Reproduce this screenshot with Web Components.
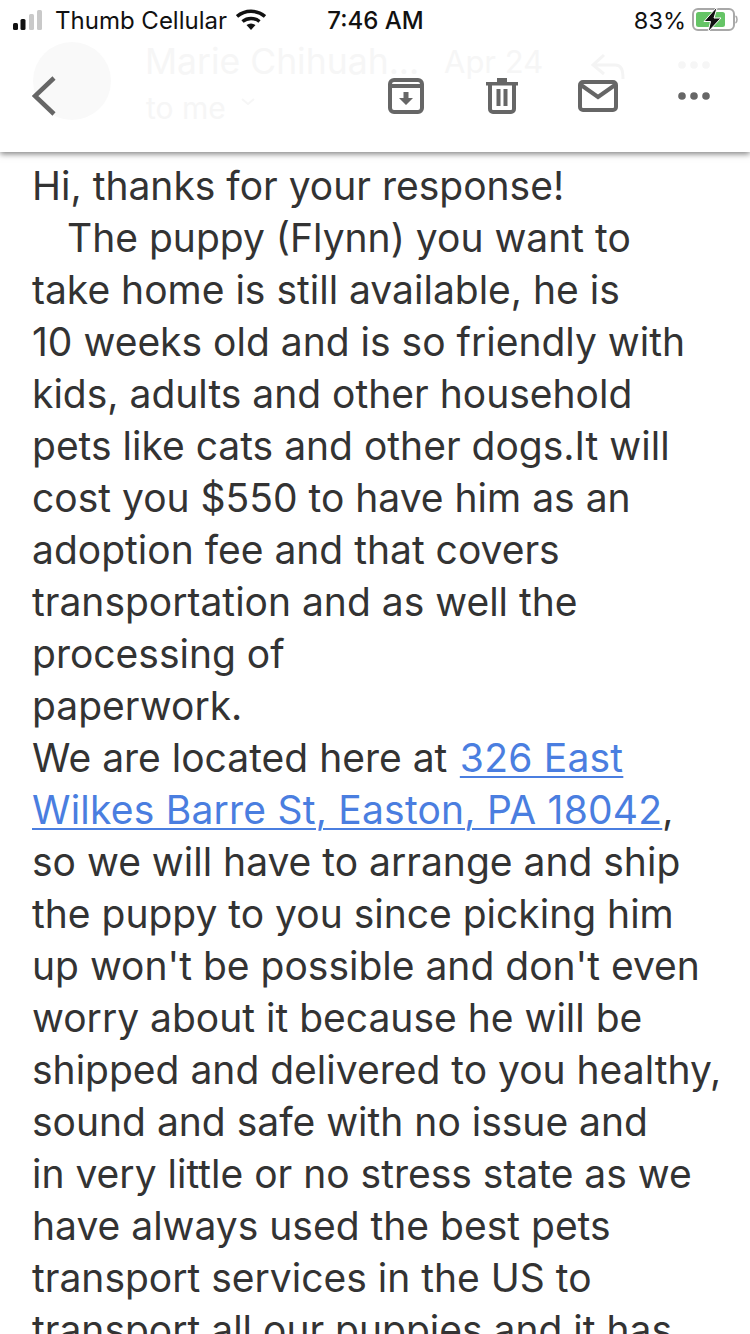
<!DOCTYPE html>
<html lang="en">
<head>
<meta charset="utf-8">
<title>Mail</title>
<style>
  html, body { margin: 0; height: 1334px; overflow: hidden; background: #fff; }
  body { font-family: Inter, "Liberation Sans", sans-serif; }
</style>
</head>
<body>
<mail-screen>
  <status-bar slot="status" carrier="Thumb Cellular" time="7:46 AM" battery="83%"></status-bar>
  <mail-toolbar slot="toolbar" sender="Marie Chihuah..." date="Apr 24" recipient="to me"></mail-toolbar>
  <mail-body>
    Hi, thanks for your response!<br>
    <span class="indent"></span>The puppy (Flynn) you want to<br>
    take home is still available, he is<br>
    10 weeks old and is so friendly with<br>
    kids, adults and other household<br>
    pets like cats and other dogs.It will<br>
    cost you $550 to have him as an<br>
    adoption fee and that covers<br>
    transportation and as well the<br>
    processing of<br>
    paperwork.<br>
    We are located here at <a href="#" style="color:#4a7ee0;margin-left:1.5px;letter-spacing:.22px;text-decoration:underline;text-decoration-thickness:2px;text-underline-offset:4px">326 East<br>Wilkes Barre St, Easton, PA 18042</a>,<br>
    so we will have to arrange and ship<br>
    the puppy to you since picking him<br>
    up won't be possible and don't even<br>
    worry about it because he will be<br>
    shipped and delivered to you healthy,<br>
    sound and safe with no issue and<br>
    in very little or no stress state as we<br>
    have always used the best pets<br>
    transport services in the US to<br>
    transport all our puppies and it has
  </mail-body>
</mail-screen>

<script>
// pantalla completa: status + toolbar + cuerpo del correo
class MailScreen extends HTMLElement {
  constructor() {
    super();
    this.attachShadow({ mode: "open" });
    this.shadowRoot.innerHTML = `
      <style>
        :host { display: flex; flex-direction: column; width: 750px; height: 1334px;
                overflow: hidden; background: #fff; }
        .top { flex: none; height: 152px; background: #fff; position: relative;
               box-shadow: 0 2px 6px rgba(0,0,0,.5); z-index: 1; }
      </style>
      <div class="top">
        <slot name="status"></slot>
        <slot name="toolbar"></slot>
      </div>
      <slot></slot>
    `;
  }
}

class StatusBar extends HTMLElement {
  constructor() {
    super();
    this.attachShadow({ mode: "open" });
    this.shadowRoot.innerHTML = `
      <style>
        :host { display: grid; grid-template-columns: 1fr auto 1fr; align-items: center;
                height: 40px; padding: 0 12px 0 13px; color: #111; font-size: 24px; }
        .left, .right { display: flex; align-items: center; }
        .left { gap: 9px; }
        .right { justify-content: flex-end; gap: 6px; }
        .right span { font-size: 23.500px; }
        .time { font-weight: 500; }
        svg { display: block; }
      </style>
      <div class="left">
        <svg width="33" height="20" viewBox="0 0 33 20">
          <rect x="0" y="13" width="5" height="7" rx="1.5" fill="#111"/>
          <rect x="7.500" y="9" width="5" height="11" rx="1.5" fill="#111"/>
          <rect x="16" y="4" width="5" height="16" rx="1.500" fill="#c9c9c9"/>
          <rect x="24" y="0" width="5" height="20" rx="1.500" fill="#c9c9c9"/>
        </svg>
        <span id="carrier"></span>
        <svg width="30" height="22" viewBox="0 0 30 22">
          <path d="M1 7.500C9 .5 21 .5 29 7.500" fill="none" stroke="#111" stroke-width="3.500"/>
          <path d="M6.500 12.500C11.500 8.500 18.500 8.500 23.500 12.500" fill="none" stroke="#111" stroke-width="3.500"/>
          <path d="M10.500 16L15 21l4.500-5C16.500 14 13.500 14 10.500 16z" fill="#111"/>
        </svg>
      </div>
      <div class="time" id="time"></div>
      <div class="right">
        <span id="battery"></span>
        <svg width="46" height="24" viewBox="0 0 46 24">
          <rect x="1" y="1" width="41" height="21" rx="5" fill="none" stroke="#a8a8a8" stroke-width="2"/>
          <rect x="4" y="4" width="29" height="15" rx="2.500" fill="#65c466"/>
          <path d="M43.500 8c2 1 2 6 0 7" fill="none" stroke="#a8a8a8" stroke-width="1.500"/>
          <path d="M24 0L12 13.500h6.500L16 24l13-14h-7l3-10z" fill="#111" stroke="#fff" stroke-width="1"/>
        </svg>
      </div>
    `;
    this.shadowRoot.querySelector("#carrier").textContent = this.getAttribute("carrier");
    this.shadowRoot.querySelector("#time").textContent = this.getAttribute("time");
    this.shadowRoot.querySelector("#battery").textContent = this.getAttribute("battery");
  }
}

// iconos de acción sobre una cabecera fantasma casi invisible (el correo detrás)
class MailToolbar extends HTMLElement {
  constructor() {
    super();
    this.attachShadow({ mode: "open" });
    this.shadowRoot.innerHTML = `
      <style>
        :host { display: flex; align-items: center; justify-content: space-between;
                position: relative; height: 112px; box-sizing: border-box;
                padding: 0 40px 0 32px; }
        .ghost { position: absolute; color: #f6f6f6; font-size: 35.500px; white-space: nowrap; }
        .avatar { position: absolute; left: 33px; top: 2px; width: 78px; height: 78px;
                  border-radius: 50%; background: #f9f9f9; }
        .sender { left: 145px; top: 0; }
        .date { left: 444px; top: 3px; font-size: 31px; }
        .to { left: 146px; top: 50px; font-size: 30px; }
        .ghost-icon { position: absolute; }
        .acts { position: relative; display: flex; align-items: center; }
        svg { display: block; }
      </style>
      <div class="avatar"></div>
      <span class="ghost sender" id="sender"></span>
      <span class="ghost date" id="date"></span>
      <span class="ghost to" id="to"></span>
      <svg class="ghost-icon" style="left:590px;top:13px" width="36" height="28" viewBox="0 0 36 28">
        <path d="M14 2L3 12l11 9M3 12h22c6 0 8 4 8 14" fill="none" stroke="#f4f4f4" stroke-width="3"/>
      </svg>
      <svg class="ghost-icon" style="left:678px;top:21px" width="32" height="8" viewBox="0 0 32 8">
        <circle cx="4" cy="4" r="3.800" fill="#f6f6f6"/>
        <circle cx="16" cy="4" r="3.800" fill="#f6f6f6"/>
        <circle cx="28" cy="4" r="3.800" fill="#f6f6f6"/>
      </svg>
      <svg class="ghost-icon" style="left:241px;top:58px" width="14" height="8" viewBox="0 0 14 8">
        <path d="M1 1l6 5 6-5" fill="none" stroke="#f6f6f6" stroke-width="2"/>
      </svg>
      <svg class="acts" width="24" height="40" viewBox="0 0 24 40">
        <path d="M22 2L3 20l19 18" fill="none" stroke="#666" stroke-width="4.500"/>
      </svg>
      <div class="acts">
        <svg width="36" height="36" viewBox="0 0 36 36" style="margin-right:62px">
          <rect x="2" y="2" width="32" height="32" rx="4" fill="none" stroke="#666" stroke-width="4"/>
          <path d="M2 8h32" stroke="#666" stroke-width="4"/>
          <path d="M15.500 14h5v6h4.500L18 27l-7-7h4.500z" fill="#666"/>
        </svg>
        <svg width="32" height="36" viewBox="0 0 32 36" style="margin-right:60px">
          <path d="M0 4h32v3.500H0zM11 0h10v4H11z" fill="#666"/>
          <path d="M4 6v25a3 3 0 0 0 3 3h18a3 3 0 0 0 3-3V6" fill="none" stroke="#666" stroke-width="4"/>
          <path d="M12.500 11v17M19.500 11v17" stroke="#666" stroke-width="4"/>
        </svg>
        <svg width="40" height="32" viewBox="0 0 40 32" style="margin-right:60px">
          <rect x="2" y="2" width="36" height="28" rx="3" fill="none" stroke="#666" stroke-width="4"/>
          <path d="M3 5l17 12L37 5" fill="none" stroke="#666" stroke-width="4"/>
        </svg>
        <svg width="32" height="8" viewBox="0 0 32 8">
          <circle cx="4" cy="4" r="3.800" fill="#666"/>
          <circle cx="16" cy="4" r="3.800" fill="#666"/>
          <circle cx="28" cy="4" r="3.800" fill="#666"/>
        </svg>
      </div>
    `;
    this.shadowRoot.querySelector("#sender").textContent = this.getAttribute("sender");
    this.shadowRoot.querySelector("#date").textContent = this.getAttribute("date");
    this.shadowRoot.querySelector("#to").textContent = this.getAttribute("recipient");
  }
}

class MailBody extends HTMLElement {
  constructor() {
    super();
    this.attachShadow({ mode: "open" });
    this.shadowRoot.innerHTML = `
      <style>
        :host { display: block; padding: 8px 0 0 32px; color: #333;
                font-size: 39px; line-height: 52px; white-space: nowrap; }
      </style>
      <slot></slot>
    `;
  }
  connectedCallback() {
    this.querySelectorAll(".indent").forEach(el => {
      el.style.display = "inline-block";
      el.style.width = "35px";
    });
  }
}

customElements.define("mail-screen", MailScreen);
customElements.define("status-bar", StatusBar);
customElements.define("mail-toolbar", MailToolbar);
customElements.define("mail-body", MailBody);
</script>
</body>
</html>
